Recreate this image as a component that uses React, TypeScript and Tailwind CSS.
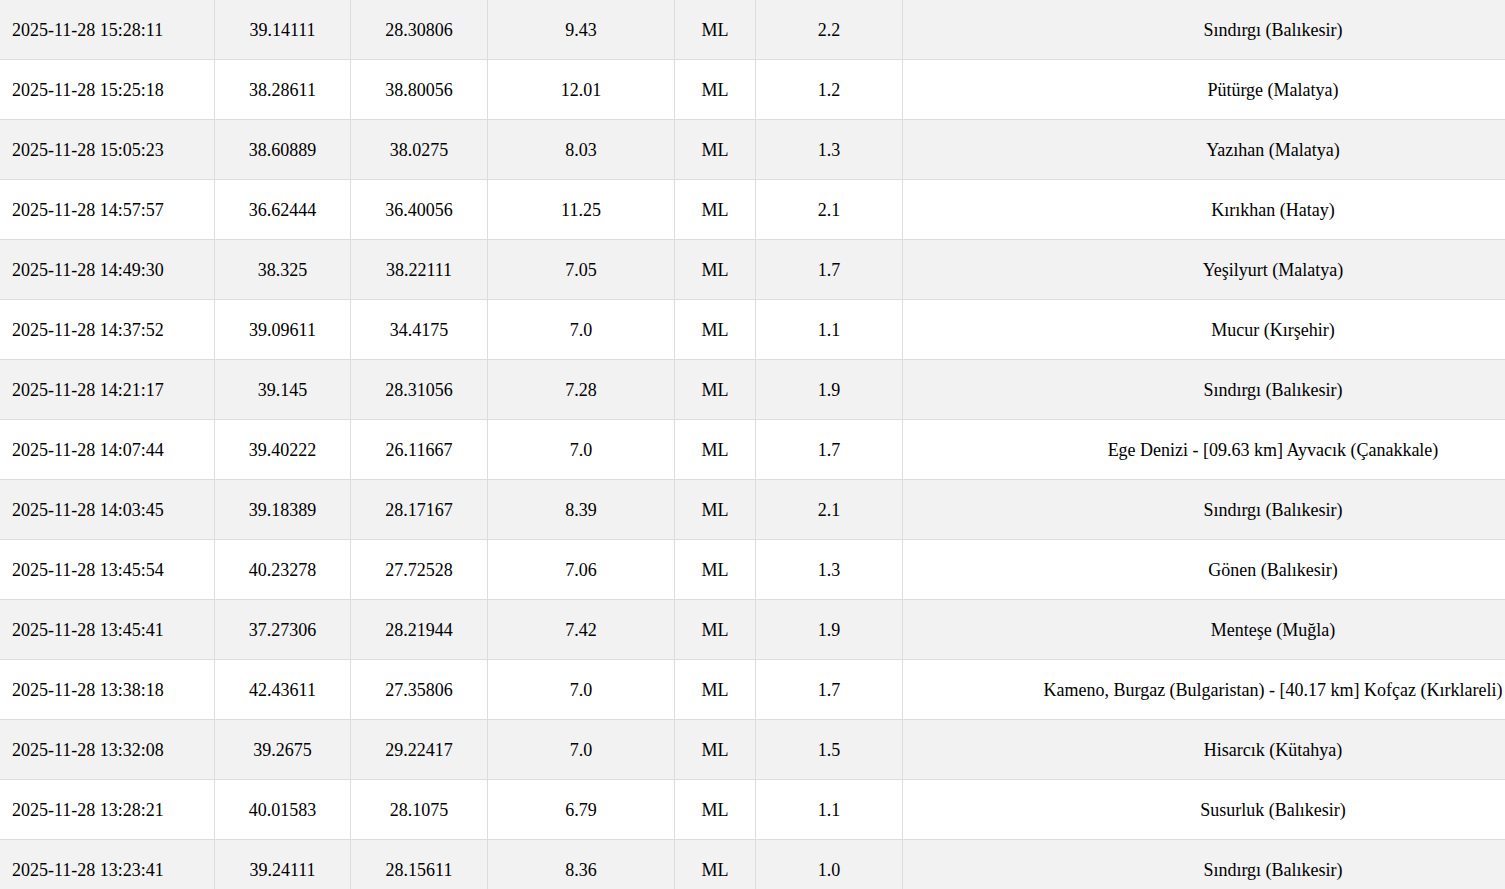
const rows = [
  ['2025-11-28 15:28:11', '39.14111', '28.30806', '9.43', 'ML', '2.2', 'Sındırgı (Balıkesir)'],
  ['2025-11-28 15:25:18', '38.28611', '38.80056', '12.01', 'ML', '1.2', 'Pütürge (Malatya)'],
  ['2025-11-28 15:05:23', '38.60889', '38.0275', '8.03', 'ML', '1.3', 'Yazıhan (Malatya)'],
  ['2025-11-28 14:57:57', '36.62444', '36.40056', '11.25', 'ML', '2.1', 'Kırıkhan (Hatay)'],
  ['2025-11-28 14:49:30', '38.325', '38.22111', '7.05', 'ML', '1.7', 'Yeşilyurt (Malatya)'],
  ['2025-11-28 14:37:52', '39.09611', '34.4175', '7.0', 'ML', '1.1', 'Mucur (Kırşehir)'],
  ['2025-11-28 14:21:17', '39.145', '28.31056', '7.28', 'ML', '1.9', 'Sındırgı (Balıkesir)'],
  ['2025-11-28 14:07:44', '39.40222', '26.11667', '7.0', 'ML', '1.7', 'Ege Denizi - [09.63 km] Ayvacık (Çanakkale)'],
  ['2025-11-28 14:03:45', '39.18389', '28.17167', '8.39', 'ML', '2.1', 'Sındırgı (Balıkesir)'],
  ['2025-11-28 13:45:54', '40.23278', '27.72528', '7.06', 'ML', '1.3', 'Gönen (Balıkesir)'],
  ['2025-11-28 13:45:41', '37.27306', '28.21944', '7.42', 'ML', '1.9', 'Menteşe (Muğla)'],
  ['2025-11-28 13:38:18', '42.43611', '27.35806', '7.0', 'ML', '1.7', 'Kameno, Burgaz (Bulgaristan) - [40.17 km] Kofçaz (Kırklareli)'],
  ['2025-11-28 13:32:08', '39.2675', '29.22417', '7.0', 'ML', '1.5', 'Hisarcık (Kütahya)'],
  ['2025-11-28 13:28:21', '40.01583', '28.1075', '6.79', 'ML', '1.1', 'Susurluk (Balıkesir)'],
  ['2025-11-28 13:23:41', '39.24111', '28.15611', '8.36', 'ML', '1.0', 'Sındırgı (Balıkesir)'],
]

export default function App() {
  return (
    <div className="w-full overflow-hidden bg-white text-black text-[18px] font-['Liberation_Serif','Times_New_Roman',serif]">
      <div className="w-[1644px]">
        {rows.map((row, i) => (
          <div
            key={i}
            className={`grid grid-cols-[215px_136px_137px_187px_81px_147px_741px] h-[60px] border-b border-[#dddddd] ${i % 2 === 0 ? 'bg-[#f2f2f2]' : 'bg-white'}`}
          >
            {row.map((cell, j) => (
              <div
                key={j}
                className={`flex items-center pt-[2px] border-r border-[#dddddd] whitespace-nowrap ${j === 0 ? 'pl-3' : 'justify-center'}`}
              >
                {cell}
              </div>
            ))}
          </div>
        ))}
      </div>
    </div>
  )
}
